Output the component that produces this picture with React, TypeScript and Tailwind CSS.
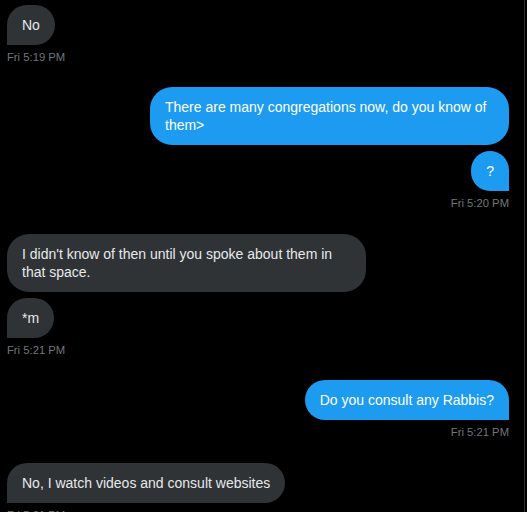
import React from "react";

type Side = "in" | "out";

function Bubble({
  side,
  last,
  children,
  wide,
}: {
  side: Side;
  last?: boolean;
  wide?: boolean;
  children: React.ReactNode;
}) {
  const base =
    "px-[15px] py-[11px] leading-[18px] text-[14px] rounded-[22px] whitespace-nowrap";
  const color =
    side === "out" ? "bg-[#1d9bf0] text-white" : "bg-[#2f3336] text-[#e7e9ea]";
  const corner = last
    ? side === "out"
      ? "rounded-br-none"
      : "rounded-bl-none"
    : "";
  const width = wide ? "w-[359px]" : "";
  return (
    <div className={`flex ${side === "out" ? "justify-end" : "justify-start"}`}>
      <div className={`${base} ${color} ${corner} ${width}`}>{children}</div>
    </div>
  );
}

function Time({ side, children }: { side: Side; children: React.ReactNode }) {
  return (
    <div
      className={`mt-[4px] h-[16px] leading-[16px] text-[11.25px] text-[#71767b] ${
        side === "out" ? "text-right" : "text-left"
      }`}
    >
      {children}
    </div>
  );
}

export default function App() {
  return (
    <div
      className="w-[527px] h-[512px] bg-black overflow-hidden flex"
      style={{ fontFamily: '"Liberation Sans", Arial, sans-serif' }}
    >
      <div className="w-[525px] h-full border-r border-[#2f3336] pl-[7px] pr-[15px] pt-[5px] flex flex-col">
        <div className="flex flex-col">
          <Bubble side="in" last>
            No
          </Bubble>
          <Time side="in">Fri 5:19 PM</Time>
        </div>

        <div className="flex flex-col gap-[6px] mt-[22px]">
          <Bubble side="out" wide>
            There are many congregations now, do you know of
            <br />
            them&gt;
          </Bubble>
          <Bubble side="out" last>
            ?
          </Bubble>
        </div>
        <Time side="out">Fri 5:20 PM</Time>

        <div className="flex flex-col gap-[6px] mt-[23px]">
          <Bubble side="in" wide>
            I didn't know of then until you spoke about them in
            <br />
            that space.
          </Bubble>
          <Bubble side="in" last>
            *m
          </Bubble>
        </div>
        <Time side="in">Fri 5:21 PM</Time>

        <div className="flex flex-col mt-[22px]">
          <Bubble side="out" last>
            Do you consult any Rabbis?
          </Bubble>
          <Time side="out">Fri 5:21 PM</Time>
        </div>

        <div className="flex flex-col mt-[23px]">
          <Bubble side="in" last>
            No, I watch videos and consult websites
          </Bubble>
          <Time side="in">Fri 5:21 PM</Time>
        </div>
      </div>
    </div>
  );
}
